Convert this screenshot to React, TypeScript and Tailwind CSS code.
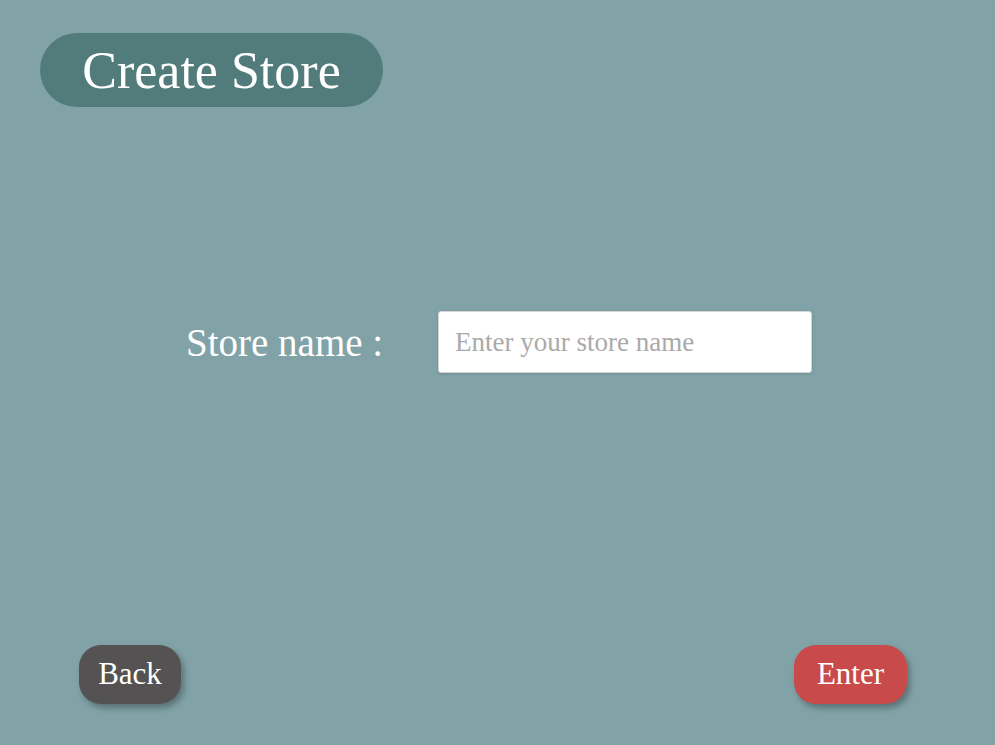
import React from "react";

export default function App() {
  const serif = { fontFamily: '"Liberation Serif", "Times New Roman", serif' };
  return (
    <div className="h-[745px] w-full bg-[#81a3a7] flex flex-col" style={serif}>
      <div className="pt-[33px] pl-[40px]">
        <div className="w-[343px] h-[74px] rounded-full bg-[#527c7b] flex items-center justify-center text-white text-[52px] leading-none pt-[2px]">
          Create Store
        </div>
      </div>
      <div className="mt-[204px] ml-[186px] flex items-center">
        <label className="text-white text-[39px] leading-none w-[198px] whitespace-nowrap">Store name :</label>
        <input
          className="ml-[54px] w-[374px] h-[62px] bg-white border border-[#d6d6d6] rounded-[3px] shadow-[0_1px_3px_rgba(0,0,0,0.15)] px-[16px] text-[27px] text-gray-700 placeholder:text-[#aaaaaa] outline-none"
          placeholder="Enter your store name"
          style={serif}
        />
      </div>
      <div className="flex-1" />
      <div className="flex justify-between pl-[79px] pr-[88px] pb-[41px]">
        <button className="w-[102px] h-[59px] rounded-[22px] bg-[#545252] text-white text-[31px] shadow-[3px_4px_6px_rgba(0,0,0,0.3)]" style={serif}>
          Back
        </button>
        <button className="w-[113px] h-[59px] rounded-[22px] bg-[#c94a4a] text-white text-[31px] shadow-[3px_4px_6px_rgba(0,0,0,0.3)]" style={serif}>
          Enter
        </button>
      </div>
    </div>
  );
}
